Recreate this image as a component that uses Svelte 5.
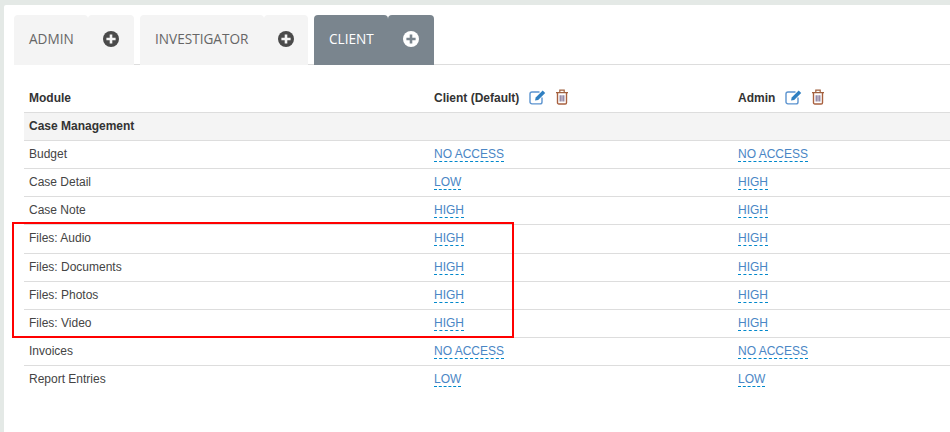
<script>
    const tabs = [
        { name: "ADMIN", active: false },
        { name: "INVESTIGATOR", active: false },
        { name: "CLIENT", active: true }
    ];

    const rows = [
        ["Budget", "NO ACCESS", "NO ACCESS"],
        ["Case Detail", "LOW", "HIGH"],
        ["Case Note", "HIGH", "HIGH"],
        ["Files: Audio", "HIGH", "HIGH"],
        ["Files: Documents", "HIGH", "HIGH"],
        ["Files: Photos", "HIGH", "HIGH"],
        ["Files: Video", "HIGH", "HIGH"],
        ["Invoices", "NO ACCESS", "NO ACCESS"],
        ["Report Entries", "LOW", "LOW"]
    ];
</script>

{#snippet actions()}
    <svg class="icon" width="18" height="16" viewBox="0 0 18 16" fill="none">
        <path d="M13 8.5v4.4a2 2 0 0 1-2 2H3a2 2 0 0 1-2-2V5a2 2 0 0 1 2-2h7.5" stroke="#5b93cf" stroke-width="1.4" />
        <path d="M6 11.6l.7-3.1 7-7 2.5 2.4-7 7z" fill="#2f7fc1" />
    </svg>
    <svg class="icon trash" width="14" height="16" viewBox="0 0 14 16" fill="none">
        <path d="M1 3.6h12M4.8 3.4V1.2h4.4v2.2" stroke="#a0613f" stroke-width="1.2" />
        <path d="M2.5 3.8v9.9a1.3 1.3 0 0 0 1.3 1.3h6.4a1.3 1.3 0 0 0 1.3-1.3V3.8" stroke="#a8603f" stroke-width="1.4" />
        <path d="M5.2 6.2v6.4M7 6.2v6.4M8.8 6.2v6.4" stroke="#76658a" stroke-width="1.1" />
    </svg>
{/snippet}

<div class="panel">
    <div class="tabs">
        {#each tabs as tab}
            <div class="tab" class:active={tab.active}>
                <span class="tab-name">{tab.name}</span>
                <span class="tab-add">
                    <svg width="16" height="16" viewBox="0 0 16 16">
                        <circle class="disc" cx="8" cy="8" r="8" />
                        <path class="plus" d="M6.7 3.4h2.6v3.3h3.3v2.6H9.3v3.3H6.7V9.3H3.4V6.7h3.3z" />
                    </svg>
                </span>
            </div>
        {/each}
    </div>

    <div class="table-wrap">
        <table>
            <colgroup>
                <col class="c1" />
                <col class="c2" />
                <col />
            </colgroup>
            <thead>
                <tr>
                    <th>Module</th>
                    <th><span class="head">Client (Default)</span>{@render actions()}</th>
                    <th><span class="head">Admin</span>{@render actions()}</th>
                </tr>
            </thead>
            <tbody>
                <tr class="group">
                    <td colspan="3">Case Management</td>
                </tr>
                {#each rows as row}
                    <tr>
                        <td>{row[0]}</td>
                        <td><a href="." class="level">{row[1]}</a></td>
                        <td><a href="." class="level">{row[2]}</a></td>
                    </tr>
                {/each}
            </tbody>
        </table>
    </div>

    <div class="highlight"></div>
</div>

<style>
    :global(body) {
        background: #e4e9e6;
        overflow: hidden;
    }

    .panel {
        position: relative;
        box-sizing: border-box;
        height: 427px;
        margin: 5px 0 0 4px;
        padding: 10px 0 0 10px;
        background: #fff;
        border-radius: 2px 0 0 0;
        overflow: hidden;
    }

    .tabs {
        display: flex;
        gap: 6px;
        height: 50px;
        box-sizing: border-box;
        border-bottom: 1px solid #ddd;
        font: 13.6px "Open Sans", sans-serif;
    }

    .tab {
        display: flex;
        height: 50px;
        color: #666;
    }

    .tab-name,
    .tab-add {
        display: flex;
        align-items: center;
        box-sizing: border-box;
        background: #f4f4f4;
        border-radius: 4px 4px 0 0;
    }

    .tab-name {
        width: 74px;
        padding: 0 0 3px 15px;
    }

    .tab-add {
        justify-content: center;
        width: 46px;
        padding-bottom: 2px;
    }

    .tab:nth-child(2) .tab-name {
        width: 124px;
    }

    .tab:nth-child(2) .tab-add {
        width: 44px;
        padding-right: 1px;
    }

    .tab.active {
        color: #fff;
    }

    .tab.active .tab-name,
    .tab.active .tab-add {
        background: #7a858e;
    }

    .disc {
        fill: #4a4a4a;
    }

    .plus {
        fill: #f4f4f4;
    }

    .active .disc {
        fill: #fff;
    }

    .active .plus {
        fill: #7a858e;
    }

    .table-wrap {
        padding: 19px 0 0 10px;
    }

    table {
        width: 926px;
        table-layout: fixed;
        border-collapse: collapse;
        font: 12px "Liberation Sans", Arial, sans-serif;
        color: #444;
    }

    .c1 {
        width: 405px;
    }

    .c2 {
        width: 304px;
    }

    th {
        height: 28px;
        padding: 0 5px;
        text-align: left;
        color: #333;
        font-weight: bold;
        border-bottom: 1px solid #ddd;
        white-space: nowrap;
    }

    td {
        height: 26px;
        padding: 0 5px 1px;
        border-top: 1px solid #ddd;
    }

    tbody tr:nth-child(5) td {
        height: 26px;
        padding-bottom: 2px;
    }

    tbody tr:first-child td {
        border-top: 0;
    }

    .group td {
        background: #f4f4f4;
        font-weight: bold;
        color: #333;
    }

    .head {
        margin-right: 10px;
    }

    .icon {
        vertical-align: 1px;
        margin: -4px 0;
    }

    .trash {
        margin-left: 8px;
    }

    .level {
        color: #4a86c5;
        text-decoration: none;
        border-bottom: 1px dashed #0088cc;
    }

    .highlight {
        position: absolute;
        left: 8px;
        top: 217px;
        width: 498px;
        height: 112px;
        border: 2px solid #f00;
        pointer-events: none;
    }
</style>
